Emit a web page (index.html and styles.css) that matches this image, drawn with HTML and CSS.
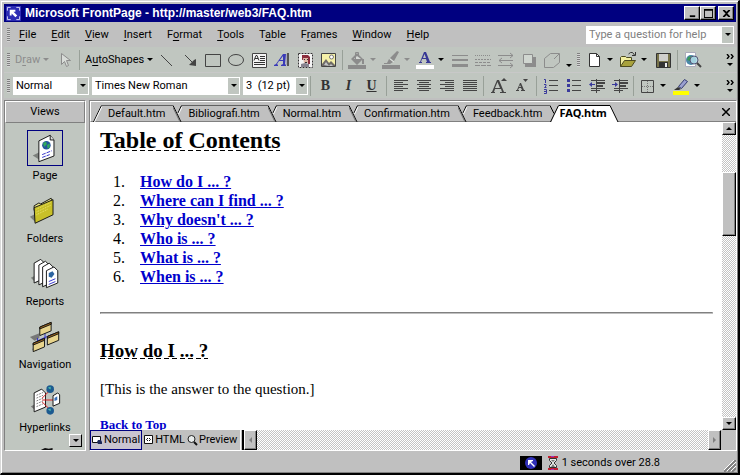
FILE: index.html
```html
<!DOCTYPE html>
<html lang="en">
<head>
<meta charset="utf-8">
<title>Microsoft FrontPage - http://master/web3/FAQ.htm</title>
<link rel="stylesheet" href="styles.css">
</head>
<body>
<div class="window">
  <header class="titlebar">
    <svg class="app-icon" viewBox="0 0 16 16"><path fill="#2c2cb4" d="M0 0h16v16H0z"/><path fill="none" stroke="#dcdcf8" stroke-width="1" d="M1.500 5V1.500H5M11 1.500h3.500V5M14.500 11v3.500H11M5 14.500H1.500V11"/><path fill="#fff" d="M4 4h6v2H8l4 4-2 2-4-4v2H4z"/></svg>
    <h1 class="title">Microsoft FrontPage - http://master/web3/FAQ.htm</h1>
    <div class="winbtns">
      <button class="winbtn" aria-label="Minimize"><svg viewBox="0 0 10 10"><path d="M2 7h6v2H2z"/></svg></button>
      <button class="winbtn" aria-label="Maximize"><svg viewBox="0 0 10 10"><path d="M0 0h10v10H0zM1 2v7h8V2z" fill-rule="evenodd"/></svg></button>
      <button class="winbtn close" aria-label="Close"><svg viewBox="0 0 10 10"><path d="M1 1h2l2 2 2-2h2v1L6 5l3 3v1H7L5 7 3 9H1V8l3-3-3-3z"/></svg></button>
    </div>
  </header>

  <nav class="menubar">
    <span class="grip"></span>
    <div class="menus">
      <button><u>F</u>ile</button><button><u>E</u>dit</button><button><u>V</u>iew</button><button><u>I</u>nsert</button><button>F<u>o</u>rmat</button><button><u>T</u>ools</button><button>T<u>a</u>ble</button><button>F<u>r</u>ames</button><button><u>W</u>indow</button><button><u>H</u>elp</button>
    </div>
    <div class="ask"><input type="text" aria-label="Type a question for help" placeholder="Type a question for help"><button class="drop" aria-label="Show questions"><i class="tri"></i></button></div>
  </nav>

  <div class="toolbar">
    <span class="grip"></span>
    <button class="txt draw off">D<u>r</u>aw<i class="tri"></i></button>
    <button class="ico" aria-label="Select objects"><svg viewBox="0 0 18 18"><path fill="#d8dcd8" stroke="#8c8c8c" d="M5.500 2.500v11l3-3 2 5 2-1-2-5h4z"/></svg></button>
    <span class="sep"></span>
    <button class="txt auto">A<u>u</u>toShapes<i class="tri"></i></button>
    <button class="ico" aria-label="Line"><svg viewBox="0 0 18 18"><path stroke="#444" d="M3 4l11 11"/></svg></button>
    <button class="ico" aria-label="Arrow"><svg viewBox="0 0 18 18"><path stroke="#444" d="M4 4l9 9"/><path fill="#444" d="M15 15V8l-2 1-3 3-2 2z"/></svg></button>
    <button class="ico" aria-label="Rectangle"><svg viewBox="0 0 18 18"><path fill="none" stroke="#444" d="M1.500 3.500h15v12h-15z"/></svg></button>
    <button class="ico" aria-label="Oval"><svg viewBox="0 0 18 18"><ellipse cx="9" cy="9" rx="7.500" ry="5.500" fill="none" stroke="#444"/></svg></button>
    <button class="ico" aria-label="Text box"><svg viewBox="0 0 18 18"><path fill="#f4f4f4" stroke="#444" d="M2.500 2.500h14v14h-14z"/><path fill="none" stroke="#333" d="M4 9.500l2-5h1l2 5M5 7.500h3M10 5.500h5M10 7.500h5M10 9.500h5M4 11.500h11M4 13.500h11"/></svg></button>
    <button class="ico" aria-label="WordArt"><svg viewBox="0 0 18 18"><path fill="#3a3ab8" d="M1 15v-1l2-1 7-10h3l-1 10 1 1v1H8v-1l2-1v-3H6l-2 3 1 1v1zM7 9h3V5z" fill-rule="evenodd"/><path fill="#555" d="M14 2h2v13h-2z"/><path fill="#aab" d="M13 3h1v11h-1z"/></svg></button>
    <button class="ico" aria-label="Clip art"><svg viewBox="0 0 18 18"><path fill="#f4f4f4" d="M2 2h15v15H2z"/><path fill="none" stroke="#333" stroke-dasharray="2 1" d="M2.500 2.500h14v14h-14z"/><path fill="#8b2d3c" d="M6 4h6l2 2v7h-2V8L6 9z"/><path fill="#e0b8a8" d="M7 7h5v5H8z"/><path fill="#333" d="M8 8h1v1H8zM11 8h1v1h-1zM9 11h2v1H9z"/><path fill="#87838f" d="M5 13l4-1 4 1v3H5z"/></svg></button>
    <button class="ico" aria-label="Picture"><svg viewBox="0 0 18 18"><path fill="#f5f1a8" stroke="#444" d="M2.500 2.500h14v13h-14z"/><circle cx="12.500" cy="6" r="2" fill="#fff" stroke="#777"/><path fill="#706c68" d="M3 13l4-5 3 4 2-2 4 4v1H3z"/><path fill="#c4c6c8" d="M5 14l2-3 3 4zM10 15l2-2 2 2z"/></svg></button>
    <span class="sep"></span>
    <button class="split off" aria-label="Fill color"><svg viewBox="0 0 18 18"><path fill="#8c8c8c" d="M0 14h18v4H0zM3 8l6-6 6 6-6 6zM14 8h2v5h-2z"/><path fill="#d6dad6" d="M6 8l3-3 4 3z"/><path fill="none" stroke="#8c8c8c" d="M7.500 8V1.500h3V5"/></svg><i class="tri"></i></button>
    <button class="split off" aria-label="Line color"><svg viewBox="0 0 18 18"><path fill="#8c8c8c" d="M0 14h18v4H0zM15 0l2 1-5 9-4-3zM7 8l4 3-3 2H2v-1h3z"/><path stroke="#dde0dd" d="M8 8l4 3"/></svg><i class="tri"></i></button>
    <button class="split" aria-label="Font color"><svg viewBox="0 0 18 18"><path fill="#fff" d="M0 14h18v4H0z"/><path fill="#373795" d="M3 12v-1h1L8 1h2l4 10h1v1h-5v-1h1l-1-3H6l-1 3h1v1zM7 7h3L8.500 3z" fill-rule="evenodd"/></svg><i class="tri"></i></button>
    <button class="ico" aria-label="Line style"><svg viewBox="0 0 18 18"><path fill="#8c8c8c" d="M1 4h16v1H1zM1 8h16v2H1zM1 13h16v3H1z"/></svg></button>
    <button class="ico" aria-label="Dash style"><svg viewBox="0 0 18 18"><path stroke="#8c8c8c" stroke-dasharray="1 1" d="M1 4.500h16"/><path stroke="#8c8c8c" stroke-dasharray="2 1" d="M1 8.500h16"/><path stroke="#8c8c8c" stroke-dasharray="3 1" d="M1 11.500h16"/><path stroke="#8c8c8c" stroke-dasharray="5 1" d="M1 14.500h16"/></svg></button>
    <button class="ico" aria-label="Arrow style"><svg viewBox="0 0 18 18"><path fill="none" stroke="#8c8c8c" d="M1 4.500h15M13 2l3 2.500L13 7M2 9.500h14M5 7L2 9.500 5 12M1 14.500h15M13 12l3 2.500-3 2.500"/></svg></button>
    <button class="ico" aria-label="Shadow"><svg viewBox="0 0 18 18"><path fill="#8c8c8c" d="M5 6h11v10H5z"/><path fill="#d0d6d0" stroke="#8c8c8c" d="M3.500 3.500h9v9h-9z"/></svg></button>
    <button class="ico" aria-label="3-D"><svg viewBox="0 0 18 18"><path fill="none" stroke="#8c8c8c" d="M1.500 7.500l6-5h9v9l-6 5h-9zM16 3l-5 5"/></svg></button>
    <button class="more" aria-label="Toolbar options"><i class="tri"></i></button>
    <span class="grip"></span>
    <button class="split" aria-label="New page"><svg viewBox="0 0 18 18"><path fill="#fff" stroke="#333" d="M4.500 2.500h7l3 3v10h-10z"/><path fill="none" stroke="#333" d="M11.500 2.500v3h3"/></svg><i class="tri"></i></button>
    <button class="split" aria-label="Open"><svg viewBox="0 0 18 18"><path fill="#f2efa0" stroke="#4c4a20" d="M1.500 15.500v-9l1-1h4l1 1h5v3"/><path fill="#a8a23c" stroke="#4c4a20" d="M1.500 15.500l4-6h11l-4 6z"/><path fill="none" stroke="#333" d="M9.500 3l2-1.500h2L15.500 4M16.500 1v3.500h-3.500"/></svg><i class="tri"></i></button>
    <button class="ico" aria-label="Save"><svg viewBox="0 0 18 18"><path fill="#77734a" stroke="#333" d="M2.500 2.500h14v14h-14z"/><path fill="#d0d0cc" d="M5 3h9v7H5z"/><path fill="#333" d="M5 11h9v5H5z"/><path fill="#eee" d="M11 12h2v4h-2z"/></svg></button>
    <span class="sep"></span>
    <button class="ico" aria-label="Preview in browser"><svg viewBox="0 0 18 18"><path fill="#fff" stroke="#aab" d="M1.500 1.500h10v14h-10z"/><circle cx="7" cy="9" r="5" fill="#4a88a8"/><path fill="#3a9a58" d="M4 6l3-1 1 2-2 3-3-1z"/><circle cx="10" cy="9" r="4" fill="#b8e4ec" fill-opacity=".8" stroke="#557"/><path stroke="#444" stroke-width="2" d="M13 12l4 4"/></svg></button>
    <button class="chev" aria-label="More buttons"><svg viewBox="0 0 8 5"><path fill="none" stroke="#000" stroke-width="1.400" d="M1 0l2 2.500L1 5M5 0l2 2.500L5 5"/></svg><i class="tri"></i></button>
  </div>

  <div class="toolbar format">
    <span class="grip"></span>
    <div class="combos">
      <label class="combo style"><select aria-label="Style"><option>Normal</option></select><span class="drop"><i class="tri"></i></span></label>
      <label class="combo font"><select aria-label="Font"><option>Times New Roman</option></select><span class="drop"><i class="tri"></i></span></label>
      <label class="combo size"><select aria-label="Font size"><option>3&nbsp; (12 pt)</option></select><span class="drop"><i class="tri"></i></span></label>
    </div>
    <span class="sep"></span>
    <div class="group">
      <button class="ico letter bold">B</button><button class="ico letter italic">I</button><button class="ico letter under">U</button>
    </div>
    <span class="sep"></span>
    <button class="ico" aria-label="Align left"><svg viewBox="0 0 18 18"><path fill="#444" d="M2 3h14v1H2zM2 5h9v1H2zM2 7h14v1H2zM2 9h9v1H2zM2 11h14v1H2zM2 13h9v1H2z"/></svg></button>
    <button class="ico" aria-label="Center"><svg viewBox="0 0 18 18"><path fill="#444" d="M2 3h14v1H2zM4 5h10v1H4zM2 7h14v1H2zM4 9h10v1H4zM2 11h14v1H2zM4 13h10v1H4z"/></svg></button>
    <button class="ico" aria-label="Align right"><svg viewBox="0 0 18 18"><path fill="#444" d="M2 3h14v1H2zM7 5h9v1H7zM2 7h14v1H2zM7 9h9v1H7zM2 11h14v1H2zM7 13h9v1H7z"/></svg></button>
    <button class="ico" aria-label="Justify"><svg viewBox="0 0 18 18"><path fill="#444" d="M2 3h14v1H2zM2 5h14v1H2zM2 7h14v1H2zM2 9h14v1H2zM2 11h14v1H2zM2 13h14v1H2z"/></svg></button>
    <span class="sep"></span>
    <div class="group">
      <button class="ico" aria-label="Increase font size"><svg viewBox="0 0 18 18"><path fill="#444" d="M1 16v-1h1L7 3h2l5 12h2v1h-6v-1h2l-1-3H5l-1 3h1v1zM5 11h5L7.500 5z" fill-rule="evenodd"/><path fill="#444" d="M11 4l3-3 3 3z"/></svg></button>
      <button class="ico" aria-label="Decrease font size"><svg viewBox="0 0 18 18"><path fill="#444" d="M3 14v-1h1l3-7h1l3 7h1v1H8v-1h1l-1-2H6l-1 2h1v1zM6 10h2L7 8z" fill-rule="evenodd"/><path fill="#444" d="M10 2h5l-2.500 3z"/></svg></button>
    </div>
    <span class="sep"></span>
    <button class="ico" aria-label="Numbering"><svg viewBox="0 0 18 18"><path fill="#444" d="M7 3h9v1H7zM7 8h9v1H7zM7 13h9v1H7z"/><path fill="none" stroke="#3a3a9c" d="M2 2.500h1.500V6M2 7.500h2V9L2.500 10.500h2M2 12.500h2.500v4H2M2 14.500h2"/></svg></button>
    <button class="ico" aria-label="Bullets"><svg viewBox="0 0 18 18"><path fill="#444" d="M7 3h9v1H7zM7 8h9v1H7zM7 13h9v1H7z"/><path fill="#3a3a9c" d="M2 2h3v3H2zM2 7h3v3H2zM2 12h3v3H2z"/></svg></button>
    <button class="ico" aria-label="Decrease indent"><svg viewBox="0 0 18 18"><path fill="#444" d="M3 3h14v1H3zM9 5h8v2H9zM9 8h6v2H9zM3 11h14v1H3zM3 13h9v1H3zM8 2h1v14H8z"/><path fill="#3a3a9c" d="M1 7.500L4 5v2h3v1H4v2z"/></svg></button>
    <button class="ico" aria-label="Increase indent"><svg viewBox="0 0 18 18"><path fill="#444" d="M3 3h14v1H3zM9 5h8v2H9zM9 8h6v2H9zM3 11h14v1H3zM3 13h9v1H3zM8 2h1v14H8z"/><path fill="#3a3a9c" d="M7 7.500L4 5v2H1v1h3v2z"/></svg></button>
    <span class="sep"></span>
    <button class="split" aria-label="Borders"><svg viewBox="0 0 18 18"><path fill="none" stroke="#444" d="M3.500 3.500h12v12h-12z"/><path stroke="#777" stroke-dasharray="1 1" d="M4 9.500h11M9.500 4v11"/></svg><i class="tri"></i></button>
    <button class="split" aria-label="Highlight"><svg viewBox="0 0 18 18"><path fill="#ff0" d="M1 14h16v4H1z"/><path fill="#9aa0d0" stroke="#333a70" d="M6.500 9.500l6-7 3 2-6 7z"/><path fill="#333" d="M2 13l4-3 3 2-2 1z"/></svg><i class="tri"></i></button>
    <button class="chev" aria-label="More buttons"><svg viewBox="0 0 8 5"><path fill="none" stroke="#000" stroke-width="1.400" d="M1 0l2 2.500L1 5M5 0l2 2.500L5 5"/></svg><i class="tri"></i></button>
  </div>

  <div class="workspace">
    <aside class="views">
      <h2 class="views-head">Views</h2>
      <div class="views-list">
        <button class="view current"><span class="pic"><svg viewBox="0 0 36 36"><path fill="#7c807c" d="M5 26l8-4v9z"/><path fill="#fff" stroke="#111" d="M11.500 10.500l12-6 4 5v17l-16 6z"/><path fill="#ddd" stroke="#111" d="M23.500 4.500v5l4 0"/><circle cx="19.500" cy="15" r="4.500" fill="#24559c"/><path fill="#2faa5c" d="M16 13l3-2 1 3-3 3zM20 15l3-2v4l-2 2z"/><path stroke="#2c2cc8" stroke-dasharray="4 1" d="M15 25l10-4M15 28l8-3"/></svg></span><span>Page</span></button>
        <button class="view"><span class="pic"><svg viewBox="0 0 36 36"><path fill="#7c807c" d="M2 24l6-3v9z"/><path fill="#ece88c" stroke="#111" d="M6.500 12.500l5-3 2 1 11-6 1 2v3l-19 8z"/><path fill="#c8c028" stroke="#111" d="M6.500 14.500L26.500 6v16l-19 9z"/><path stroke="#eeea78" stroke-dasharray="1 1" d="M9 16l15-7M9 19l15-7M9 22l12-6"/></svg></span><span>Folders</span></button>
        <button class="view"><span class="pic"><svg viewBox="0 0 36 36"><path fill="#7c807c" d="M3 22l6-3v9z"/><g fill="#fff" stroke="#111"><path d="M6.500 6.500l7-4 4 4v16l-11 5z"/><path d="M11.500 8.500l7-4 4 4v16l-11 5z"/><path d="M15.500 10.500l7-4 4 4v16l-11 5z"/><path d="M19.500 14.500l8-4 4 4v13l-12 5z"/></g><path fill="#2c64a0" d="M22 17l4-2 2 3-3 4-3-1z"/><path stroke="#2c2cc8" d="M22 26l7-3M22 29l7-3"/></svg></span><span>Reports</span></button>
        <button class="view"><span class="pic"><svg viewBox="0 0 36 36"><path fill="#777" d="M2 18l10-4v5l-5 3zM4 31l5-3v5z"/><path fill="none" stroke="#2c2cc8" stroke-width="1" d="M18 14v6M10 22l16-7v5M10 19v6"/><g stroke="#111"><path fill="#e8d48c" d="M12.500 7.500l12-5v9l-12 5zM5.500 24.500l12-5v9l-12 5zM20.500 17.500l12-5v9l-12 5z"/><path fill="#a06820" d="M12.500 7.500l12-5v2l-12 5zM5.500 24.500l12-5v2l-12 5zM20.500 17.500l12-5v2l-12 5z"/></g></svg></span><span>Navigation</span></button>
        <button class="view"><span class="pic"><svg viewBox="0 0 36 36"><path fill="#777" d="M3 25l5-3v7z"/><path fill="#fff" stroke="#111" d="M6.500 10.500l8-4 4 4v15l-12 5z"/><path stroke="#777" stroke-dasharray="2 1" d="M9 13l7-3M9 16l7-3M9 19l7-3M9 22l7-3M9 25l7-3"/><path stroke="#d81818" fill="none" d="M15 16l8-8M15 18h12M15 20l8 8"/><circle cx="23.500" cy="6.500" r="4" fill="#1c5a90"/><circle cx="23.500" cy="29.500" r="4" fill="#1c5a90"/><path fill="#4cc0a8" d="M21 5l3-1v3zM21 28l3-1v3z"/><path fill="#fff" stroke="#111" d="M26.500 13.500l5-3 2 2v9l-7 3z"/><path fill="#3a70b8" d="M28 16l3-2v4l-3 1z"/></svg></span><span>Hyperlinks</span></button>
        <button class="view" aria-label="Tasks"><span class="pic"><svg viewBox="0 0 36 36"><path fill="#111" d="M14 4l4-2 4 1 4-1v3H14z"/></svg></span></button>
      </div>
      <button class="scroll-views" aria-label="Scroll down"><i class="tri"></i></button>
    </aside>

    <main class="editor">
      <div class="tabs">
        <svg class="edge" viewBox="0 0 9 17"><path d="M.5 17L8.500.5" stroke="#000" fill="none"/><path d="M1.500 17L9 1.500" stroke="#fff" fill="none"/></svg>
        <button class="tab">Default.htm</button>
        <svg class="edge" viewBox="0 0 9 17"><use href="#joint"/></svg>
        <button class="tab">Bibliografi.htm</button>
        <svg class="edge" viewBox="0 0 9 17"><use href="#joint"/></svg>
        <button class="tab">Normal.htm</button>
        <svg class="edge" viewBox="0 0 9 17"><use href="#joint"/></svg>
        <button class="tab">Confirmation.htm</button>
        <svg class="edge" viewBox="0 0 9 17"><use href="#joint"/></svg>
        <button class="tab">Feedback.htm</button>
        <svg class="edge" viewBox="0 0 9 17"><path d="M0 .5l4 8" stroke="#000" fill="none"/><path d="M1 17L9 .5V17z" fill="#fff"/><path d="M.5 17L8.500.5" stroke="#000" fill="none"/></svg>
        <button class="tab active">FAQ.htm</button>
        <svg class="edge" viewBox="0 0 9 17"><path d="M0 .5L8 17H0z" fill="#fff"/><path d="M0 .5L8 17" stroke="#000" fill="none"/></svg>
        <button class="close-tab" aria-label="Close page"><svg viewBox="0 0 8 8"><path stroke="#000" stroke-width="1.500" d="M0 0l8 8M8 0L0 8"/></svg></button>
        <svg class="defs"><defs><g id="joint" fill="none"><path d="M0 .5L8 17" stroke="#000"/><path d="M-1 .5l8 16.500" stroke="#777"/><path d="M8.500.5L5 8" stroke="#000"/><path d="M9 2L5.500 9" stroke="#fff"/></g></defs></svg>
      </div>
      <div class="pane">
        <article class="doc">
          <h2><span class="mark">Table of Contents</span></h2>
          <ol>
            <li><a href="#how">How do I ... ?</a></li>
            <li><a href="#where">Where can I find ... ?</a></li>
            <li><a href="#why">Why doesn't ... ?</a></li>
            <li><a href="#who">Who is ... ?</a></li>
            <li><a href="#what">What is ... ?</a></li>
            <li><a href="#when">When is ... ?</a></li>
          </ol>
          <hr>
          <h3 id="how"><span class="mark">How do I ... ?</span></h3>
          <p>[This is the answer to the question.]</p>
          <p class="back"><a href="#top">Back to Top</a></p>
        </article>
        <div class="vscroll">
          <button class="sb" aria-label="Scroll up"><i class="tri up"></i></button>
          <div class="thumb"></div>
          <button class="sb" aria-label="Scroll down"><i class="tri"></i></button>
        </div>
      </div>
      <div class="modes">
        <button class="mode on"><svg viewBox="0 0 11 11"><path fill="#fff" stroke="#111" d="M.5 1.500h8v6h-8z"/><path fill="#1c2858" d="M6 5h3l1 2v2H6L5 7z"/></svg>Normal</button>
        <button class="mode"><svg viewBox="0 0 11 11"><path fill="#fff" stroke="#111" d="M1.500.5h8v8h-8z"/><path fill="none" stroke="#111" d="M5 3L3.500 4.500 5 6M6 3l1.500 1.500L6 6"/></svg>HTML</button>
        <button class="mode"><svg viewBox="0 0 11 11"><circle cx="4.500" cy="4" r="3.500" fill="#e8ecec" stroke="#222"/><path stroke="#111" stroke-width="2" d="M7 7l3 3"/></svg>Preview</button>
        <span class="splitter"></span>
        <div class="hscroll">
          <button class="sb off" aria-label="Scroll left"><i class="tri left"></i></button>
          <button class="sb off" aria-label="Scroll right"><i class="tri right"></i></button>
        </div>
      </div>
    </main>
  </div>

  <footer class="status">
    <svg class="badge" viewBox="0 0 22 14"><path d="M0 0h22v14H0z"/><circle cx="11" cy="7" r="6" fill="#3030b8"/><path fill="#fff" d="M8 4h5v1l-2 1 4 4-1 1-4-4-1 2H8z"/></svg>
    <svg class="glass" viewBox="0 0 10 14"><path fill="#c02030" d="M0 0h10v2H0zM0 12h10v2H0z"/><path fill="#a030c0" d="M3 0h3v1H3zM3 13h3v1H3z"/><path fill="#e4e8e4" stroke="#333" d="M1.500 2.500h7v2L6 7l2.500 2.500v2h-7v-2L4 7 1.500 4.500z"/><path fill="#777" d="M3 4h4L5 6zM5 8l2 3H3z"/></svg>
    <span>1 seconds over 28.8</span>
    <svg class="resize" viewBox="0 0 12 12"><path stroke="#808080" stroke-width="2" d="M0 12L12 0M4 12l8-8M8 12l4-4"/><path stroke="#fff" d="M-1 11L11-1M3 11l9-9M7 11l5-5"/></svg>
  </footer>
</div>
</body>
</html>
```
FILE: styles.css
```css
* { box-sizing: border-box; }

body {
  margin: 0;
  background: #000;
  color: #000;
  font: 11px/14px Roboto, "Liberation Sans", sans-serif;
}

button, input, select { font: inherit; color: inherit; }

button {
  margin: 0;
  padding: 0;
  border: 0;
  background: none;
}

svg { display: block; flex: none; }
u { text-underline-offset: 2px; }

.window {
  display: flex;
  flex-direction: column;
  height: 100vh;
  background: #c0c0c0;
  border: solid;
  border-width: 1px 2px 2px 1px;
  border-color: #d8d8d8 #000 #000 #d8d8d8;
  box-shadow: inset 1px 1px #fff, inset -1px -1px #808080;
  padding: 3px 1px 1px 3px;
  overflow: hidden;
}

/* title bar */
.titlebar {
  display: flex;
  align-items: center;
  height: 18px;
  flex: none;
  padding: 0 2px;
  margin-right: 1px;
  background: #000080;
  color: #fff;
}
.app-icon { width: 15px; height: 15px; }
.title {
  flex: 1;
  margin: 0 0 0 4px;
  font: bold 12px/18px "Liberation Sans", sans-serif;
  white-space: nowrap;
}
.winbtns { display: flex; }
.winbtn {
  width: 16px;
  height: 14px;
  display: grid;
  place-items: center;
  background: #c0c0c0;
  border: 1px solid;
  border-color: #fff #000 #000 #fff;
  box-shadow: inset -1px -1px #808080;
}
.winbtn svg { width: 9px; height: 9px; }
.winbtn.close { margin-left: 2px; }

/* shared bar parts */
.grip {
  width: 3px;
  height: 14px;
  margin: 0 3px;
  flex: none;
  background: repeating-linear-gradient(#808080 0 1px, #d4d4d4 1px 2px);
}
.tri {
  flex: none;
  width: 0;
  border: solid transparent;
  border-width: 3px 3px 0;
  border-top-color: #000;
}
.tri.up { border-width: 0 3px 3px; border-bottom-color: #000; }
.tri.left { border-width: 3px 3px 3px 0; border-color: transparent #808080; }
.tri.right { border-width: 3px 0 3px 3px; border-color: transparent #808080; }
.off { color: #8c8c8c; }
.off .tri { border-top-color: #8c8c8c; }
.sb.off .tri { border-top-color: transparent; }
.drop {
  display: grid;
  place-items: center;
  width: 11px;
  background: #c0c6c0;
}

/* menu bar */
.menubar { display: flex; align-items: center; height: 25px; flex: none; }
.menus { display: flex; gap: 15px; margin-left: 6px; }
.ask {
  display: flex;
  width: 148px;
  height: 18px;
  margin-left: auto;
  margin-right: 3px;
  padding: 1px;
  background: #fff;
}
.ask input {
  flex: 1;
  min-width: 0;
  border: 0;
  padding: 0 2px;
  background: #fff;
}
.ask input::placeholder { color: #808080; opacity: 1; }

/* toolbars */
.toolbar {
  display: flex;
  align-items: center;
  height: 25px;
  flex: none;
  background: #c0c6c0;
}
.toolbar.format { height: 26px; border-top: 1px solid #c8c8c8; }
.sep { width: 1px; height: 20px; margin: 0 3px; flex: none; background: #98a098; }
.format .sep { margin: 0 2px; }
.txt { display: flex; align-items: center; flex: none; padding-left: 2px; }
.txt .tri { margin-left: 3px; }
.draw { width: 40px; }
.auto { width: 72px; }
.ico { display: grid; place-items: center; width: 23px; height: 22px; flex: none; }
.ico svg, .split svg { width: 18px; height: 18px; }
.split { display: flex; align-items: center; gap: 4px; width: 34px; padding-left: 2px; flex: none; }
.more { width: 11px; height: 14px; display: grid; place-items: end center; }
.group { display: flex; padding: 0 1px; }
.letter { font: bold 14px/18px "Liberation Serif", serif; color: #333; }
.italic { font-style: italic; }
.under { text-decoration: underline; }
.chev { display: grid; place-items: center; gap: 4px; width: 14px; margin-left: auto; }
.chev svg { width: 8px; height: 5px; }
.combos { display: flex; gap: 3px; }
.combo { display: flex; height: 18px; padding: 1px; background: #fff; }
.combo select {
  flex: 1;
  min-width: 0;
  appearance: none;
  border: 0;
  padding: 0 2px;
  background: #fff;
}
.style { width: 76px; }
.font { width: 148px; }
.size { width: 65px; }

/* workspace */
.workspace { display: flex; flex: 1; gap: 3px; min-height: 0; padding-top: 2px; }
.views {
  position: relative;
  display: flex;
  flex-direction: column;
  width: 82px;
  flex: none;
  background: #c0c6c0;
  border: 1px solid;
  border-color: #808080 #fff #fff #808080;
}
.views-head {
  margin: 0;
  padding: 2px 0;
  flex: none;
  background: #c0c0c0;
  border: 1px solid;
  border-color: #fff #808080 #808080 #fff;
  font: inherit;
  line-height: 16px;
  text-align: center;
}
.views-list { flex: 1; overflow: hidden; padding: 7px 0 0; display: flex; flex-direction: column; gap: 8px; }
.view { display: flex; flex-direction: column; align-items: center; gap: 1px; flex: none; line-height: 18px; }
.pic { width: 36px; height: 36px; border: 1px solid transparent; }
.pic svg { width: 34px; height: 34px; }
.current .pic { border-color: #000080; }
.scroll-views {
  position: absolute;
  right: 3px;
  bottom: 3px;
  width: 13px;
  height: 13px;
  display: grid;
  place-items: center;
  background: #c0c0c0;
  border: 1px solid;
  border-color: #fff #000 #000 #fff;
}

.editor {
  flex: 1;
  min-width: 0;
  display: flex;
  flex-direction: column;
  border: 1px solid;
  border-color: #808080 #fff #fff #808080;
}
.tabs {
  display: flex;
  align-items: flex-end;
  height: 21px;
  flex: none;
  padding-left: 2px;
  border-top: 1px solid #fff;
  border-left: 1px solid #fff;
  border-bottom: 1px solid #808080;
}
.edge { width: 9px; height: 17px; margin-bottom: -1px; }
.defs { width: 0; height: 0; }
.tab { height: 16px; padding: 0 8px 0 6px; border-top: 1px solid #606060; line-height: 15px; }
.tab.active {
  height: 17px;
  margin-bottom: -1px;
  padding: 0 3px 2px 0;
  background: #fff;
  border-color: #000;
  font: bold 11px/14px "Noto Sans", sans-serif;
}
.close-tab { margin: 0 6px 5px auto; }
.close-tab svg { width: 8px; height: 8px; }

.pane { flex: 1; display: flex; min-height: 0; background: #fff; }
.doc {
  flex: 1;
  min-width: 0;
  overflow: hidden;
  padding: 4px 9px 0 10px;
  font: 16px/19px "Liberation Serif", serif;
}
.doc h2 { margin: 0 0 18px; font-size: 24px; line-height: 28px; }
.doc h3 { margin: 0 0 18px; font-size: 19px; line-height: 22px; }
.mark {
  background: repeating-linear-gradient(90deg, #000 0 5px, transparent 5px 8px) left 0 bottom 2px / 100% 1px no-repeat;
}
.doc ol { margin: 0 0 26px; padding: 0; list-style: none; counter-reset: item; }
.doc li { display: flex; gap: 15px; counter-increment: item; }
.doc li::before { content: counter(item) "."; width: 25px; text-align: right; }
.doc hr { margin: 0 0 26px; border: 1px solid; border-color: #808080 #c0c0c0 #c0c0c0 #808080; }
.doc p { margin: 0 0 16px; font-size: 15px; }
.doc a { color: #0000cc; font-weight: bold; }
.doc .back { font-size: 13px; }

.vscroll, .hscroll {
  background: repeating-conic-gradient(#c4c4c4 0 25%, #fff 0 50%) 0 0 / 2px 2px;
}
.vscroll { width: 14px; flex: none; display: flex; flex-direction: column; }
.sb, .thumb {
  flex: none;
  background: #c0c0c0;
  border: 1px solid;
  border-color: #fff #000 #000 #fff;
  box-shadow: inset -1px -1px #808080;
}
.sb { display: grid; place-items: center; width: 13px; height: 13px; }
.vscroll .sb { width: 14px; }
.thumb { height: 64px; margin: 37px 0 auto; }

.modes { display: flex; height: 20px; flex: none; }
.mode { display: flex; align-items: center; gap: 1px; flex: none; padding: 0 1px; border: 1px solid transparent; }
.mode + .mode { padding: 0; }
.mode svg { width: 11px; height: 11px; }
.mode.on { background: #c8c4d0; border-color: #000080; }
.splitter { width: 4px; margin-left: 2px; border-left: 1px solid #fff; border-right: 2px solid #000; }
.hscroll { flex: 1; display: flex; justify-content: space-between; border-right: 15px solid #c0c0c0; }
.hscroll .sb { height: 20px; }

/* status bar */
.status { display: flex; align-items: center; height: 21px; flex: none; padding-top: 2px; }
.badge { width: 22px; height: 14px; margin-left: auto; }
.glass { width: 10px; height: 14px; margin: 0 4px 0 6px; }
.resize { width: 12px; height: 12px; margin: 7px 1px 0 64px; }
```
